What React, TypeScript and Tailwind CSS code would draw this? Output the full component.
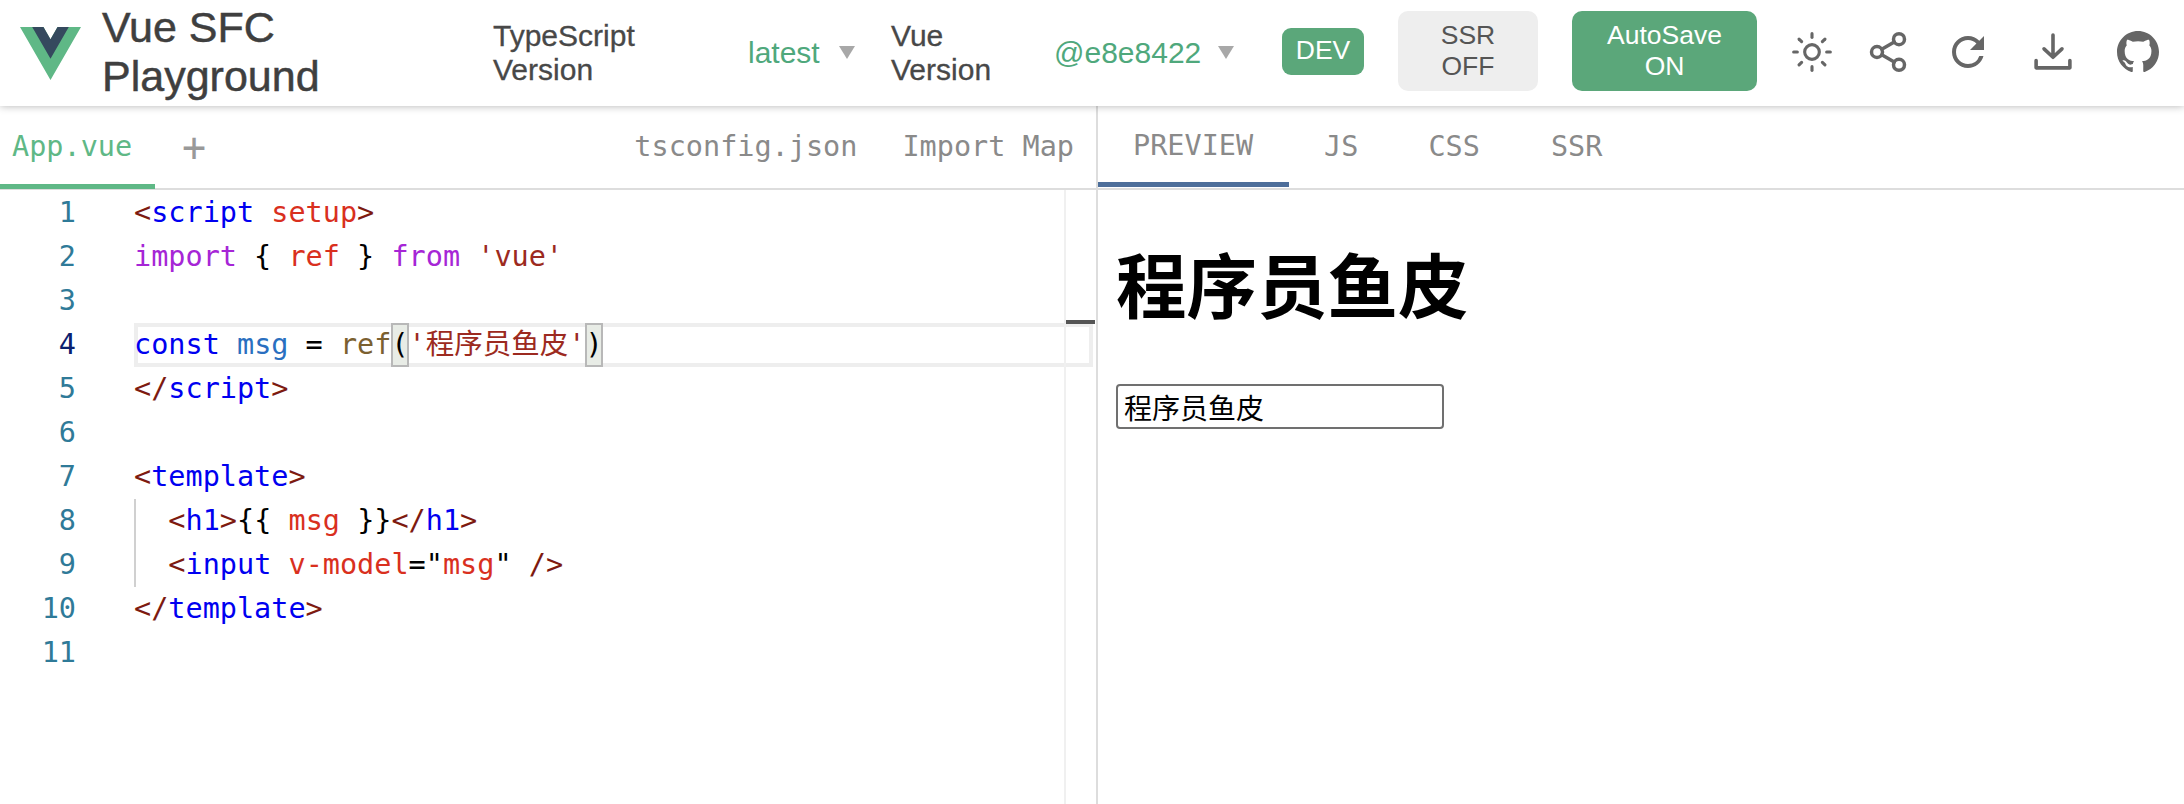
import { Sun, Share2 } from "lucide-react";

const C = {
  delim: "text-[#7d1a10]",
  tag: "text-[#0000f0]",
  attr: "text-[#d9301e]",
  kw: "text-[#a626d6]",
  str: "text-[#9c2a20]",
  plain: "text-[#000000]",
  blue: "text-[#0000f0]",
  msg: "text-[#2a6fc0]",
  fn: "text-[#7b6030]",
};

type Tok = [string, string];

const lines: Tok[][] = [
  [["<", C.delim], ["script", C.tag], [" ", C.plain], ["setup", C.attr], [">", C.delim]],
  [["import", C.kw], [" { ", C.plain], ["ref", C.attr], [" } ", C.plain], ["from", C.kw], [" ", C.plain], ["'vue'", C.str]],
  [],
  [],
  [["</", C.delim], ["script", C.tag], [">", C.delim]],
  [],
  [["<", C.delim], ["template", C.tag], [">", C.delim]],
  [["  ", C.plain], ["<", C.delim], ["h1", C.tag], [">", C.delim], ["{{ ", C.plain], ["msg", C.attr], [" }}", C.plain], ["</", C.delim], ["h1", C.tag], [">", C.delim]],
  [["  ", C.plain], ["<", C.delim], ["input", C.tag], [" ", C.plain], ["v-model", C.attr], ["=\"", C.plain], ["msg", C.attr], ["\"", C.plain], [" ", C.plain], ["/>", C.delim]],
  [["</", C.delim], ["template", C.tag], [">", C.delim]],
  [],
];

function VueLogo() {
  return (
    <svg viewBox="0 0 261.76 226.69" className="w-[61px] h-[53px] shrink-0">
      <path d="M161.096.001l-30.225 52.351L100.647.001H-.005l130.877 226.688L261.749.001z" fill="#5fb886" />
      <path d="M161.096.001l-30.225 52.351L100.647.001H52.346l78.526 136.01L209.398.001z" fill="#35495e" />
    </svg>
  );
}

function Caret() {
  return <span className="w-0 h-0 border-x-[8px] border-x-transparent border-t-[13px] border-t-[#a8a8a8] shrink-0" />;
}

function VersionPicker({ label, value, labelWidth, width, gap }: { label: string; value: string; labelWidth: string; width: string; gap: string }) {
  return (
    <div className={`flex items-center ${width}`}>
      <div className={`${labelWidth} text-[30px] leading-[34px] text-[#484848] -mt-[1px] [-webkit-text-stroke:0.3px]`}>
        <div className="w-min">{label}</div>
      </div>
      <div className={`flex items-center ${gap} text-[30px] text-[#4fa87c] -mt-[1px]`}>
        <span>{value}</span>
        <Caret />
      </div>
    </div>
  );
}

function Header() {
  return (
    <header className="relative z-10 h-[106px] pl-[20px] flex items-center bg-white shadow-[0_0_8px_rgba(0,0,0,0.3)] font-['Liberation_Sans',sans-serif]">
      <div className="w-[473px] flex items-center gap-[21px]">
        <VueLogo />
        <h1 className="w-[260px] text-[43px] leading-[49px] text-[#3f3f3f] -mt-[3px] [-webkit-text-stroke:0.5px]">Vue SFC Playground</h1>
      </div>
      <VersionPicker label="TypeScript Version" value="latest" labelWidth="w-[255px]" width="w-[398px]" gap="gap-[19px]" />
      <VersionPicker label="Vue Version" value="@e8e8422" labelWidth="w-[163px]" width="w-[391px]" gap="gap-[17px]" />
      <span className="w-[82px] h-[47px] rounded-[9px] bg-[#5ba77a] text-white text-[26.5px] flex items-center justify-center -mt-[4px]">DEV</span>
      <button className="ml-[34px] w-[140px] h-[80px] rounded-[10px] bg-[#eeeeee] text-[#555555] text-[26.5px] leading-[31px] -mt-[4px]">
        SSR<br />OFF
      </button>
      <button className="ml-[34px] w-[185px] h-[80px] rounded-[10px] bg-[#5ba77a] text-white text-[26.5px] leading-[31px] -mt-[4px]">
        AutoSave<br />ON
      </button>
      <div className="ml-[33px] flex items-center text-[#666666] -mt-[3px]">
        <Sun className="w-[44px] h-[44px]" strokeWidth={1.7} />
        <Share2 className="ml-[32px] w-[44px] h-[44px]" strokeWidth={1.9} />
        <svg viewBox="0 0 24 24" className="ml-[34px] w-[48px] h-[48px]" fill="currentColor">
          <path d="M17.65 6.35A7.958 7.958 0 0 0 12 4c-4.42 0-7.99 3.58-7.99 8s3.57 8 7.99 8c3.73 0 6.84-2.55 7.73-6h-2.08A5.99 5.99 0 0 1 12 18c-3.31 0-6-2.69-6-6s2.69-6 6-6c1.66 0 3.14.69 4.22 1.78L13 11h7V4l-2.35 2.35z" />
        </svg>
        <svg viewBox="0 0 36 36" className="ml-[42px] w-[38px] h-[40px]" fill="none" stroke="currentColor" strokeWidth="3.4" strokeLinecap="round" strokeLinejoin="round">
          <path d="M18 2v21M9.5 15 18 23l8.5-8M2 26v7h32v-7" />
        </svg>
        <svg viewBox="0 0 16 16" className="ml-[45px] w-[42px] h-[42px]" fill="currentColor">
          <path d="M8 0C3.58 0 0 3.58 0 8c0 3.54 2.29 6.53 5.47 7.59.4.07.55-.17.55-.38 0-.19-.01-.82-.01-1.49-2.01.37-2.53-.49-2.69-.94-.09-.23-.48-.94-.82-1.13-.28-.15-.68-.52-.01-.53.63-.01 1.08.58 1.23.82.72 1.21 1.87.87 2.33.66.07-.52.28-.87.51-1.07-1.78-.2-3.64-.89-3.64-3.95 0-.87.31-1.59.82-2.15-.08-.2-.36-1.02.08-2.12 0 0 .67-.21 2.2.82.64-.18 1.32-.27 2-.27.68 0 1.36.09 2 .27 1.53-1.04 2.2-.82 2.2-.82.44 1.1.16 1.92.08 2.12.51.56.82 1.27.82 2.15 0 3.07-1.87 3.75-3.65 3.95.29.25.54.73.54 1.48 0 1.07-.01 1.93-.01 2.2 0 .21.15.46.55.38A8.013 8.013 0 0016 8c0-4.42-3.58-8-8-8z" />
        </svg>
      </div>
    </header>
  );
}

function ActiveLine() {
  return (
    <div className="h-[44px] border-[4px] border-[#eeeeee] flex items-center whitespace-pre mr-[3px]">
      <span className="-ml-[4px] text-[#0000f0]">const</span>
      <span> </span>
      <span className={C.msg}>msg</span>
      <span> = </span>
      <span className={C.fn}>ref</span>
      <span className="h-[44px] -my-[4px] flex items-center bg-[#e8ece6] outline-2 -outline-offset-2 outline-[#b8b8b8]">(</span>
      <span className={C.str}>'程序员鱼皮'</span>
      <span className="h-[44px] -my-[4px] flex items-center bg-[#e8ece6] outline-2 -outline-offset-2 outline-[#b8b8b8]">)</span>
    </div>
  );
}

function Editor() {
  return (
    <div className="relative flex-1 pt-[1px] flex text-[28.5px] leading-[44px] font-['DejaVu_Sans_Mono','Noto_Sans_CJK_SC',monospace]">
      <div className="w-[134px] shrink-0">
        {lines.map((_, i) => (
          <div key={i} className={`h-[44px] pr-[58px] text-right ${i === 3 ? "text-[#0b216f]" : "text-[#2f7a98]"}`}>
            {i + 1}
          </div>
        ))}
      </div>
      <div className="relative flex-1">
        {lines.map((toks, i) =>
          i === 3 ? (
            <ActiveLine key={i} />
          ) : (
            <div key={i} className="h-[44px] whitespace-pre">
              {toks.map(([t, c], j) => (
                <span key={j} className={c}>{t}</span>
              ))}
            </div>
          )
        )}
        {/* indent guide */}
        <div className="absolute left-0 top-[308px] w-[2px] h-[88px] bg-[#d0d0d0]" />
      </div>
      {/* minimap gutter */}
      <div className="absolute top-0 bottom-0 left-[1064px] w-[32px] border-l-2 border-[#f0f0f0]">
        <div className="absolute left-0 top-[130px] w-[29px] h-[4px] bg-[#555555]" />
      </div>
    </div>
  );
}

function LeftPane() {
  return (
    <div className="w-[1096px] h-full flex flex-col">
      <div className="h-[84px] flex items-stretch border-b-2 border-[#dddddd] text-[28.5px] text-[#8a8a8a] font-['DejaVu_Sans_Mono',monospace]">
        <div className="w-[155px] pl-[12px] pt-[5px] border-b-[5px] border-[#5fb886] -mb-[1px] text-[#5fb886] flex items-center">App.vue</div>
        <div className="ml-[27px] flex items-center text-[40px] text-[#999999]">+</div>
        <div className="ml-auto flex items-center pr-[22px] gap-[45px]">
          <span>tsconfig.json</span>
          <span>Import Map</span>
        </div>
      </div>
      <Editor />
    </div>
  );
}

function RightPane() {
  return (
    <div className="flex-1 h-full border-l-2 border-[#dddddd] flex flex-col">
      <div className="h-[84px] flex items-stretch border-b-2 border-[#dddddd] text-[28.5px] text-[#8a8a8a] font-['DejaVu_Sans_Mono',monospace]">
        <div className="pl-[35px] pr-[36px] pt-[5px] border-b-[5px] border-[#4d6e9a] mb-[1px] flex items-center">PREVIEW</div>
        <div className="px-[35px] flex items-center">JS</div>
        <div className="pl-[35px] pr-[36px] flex items-center">CSS</div>
        <div className="px-[35px] flex items-center">SSR</div>
      </div>
      <div className="pl-[18px] pt-[49px] font-['Liberation_Sans','Noto_Sans_CJK_SC',sans-serif] text-black">
        <div className="text-[70.5px] leading-[100px] font-bold">程序员鱼皮</div>
        <input
          readOnly
          value="程序员鱼皮"
          className="mt-[45px] block w-[328px] h-[45px] px-[6px] text-[28px] border-2 border-[#707070] rounded-[4px] outline-none font-['Noto_Sans_CJK_SC',sans-serif]"
        />
      </div>
    </div>
  );
}

export default function App() {
  return (
    <div className="w-[2184px] h-[804px] overflow-hidden bg-white flex flex-col">
      <Header />
      <main className="flex-1 flex min-h-0">
        <LeftPane />
        <RightPane />
      </main>
    </div>
  );
}
